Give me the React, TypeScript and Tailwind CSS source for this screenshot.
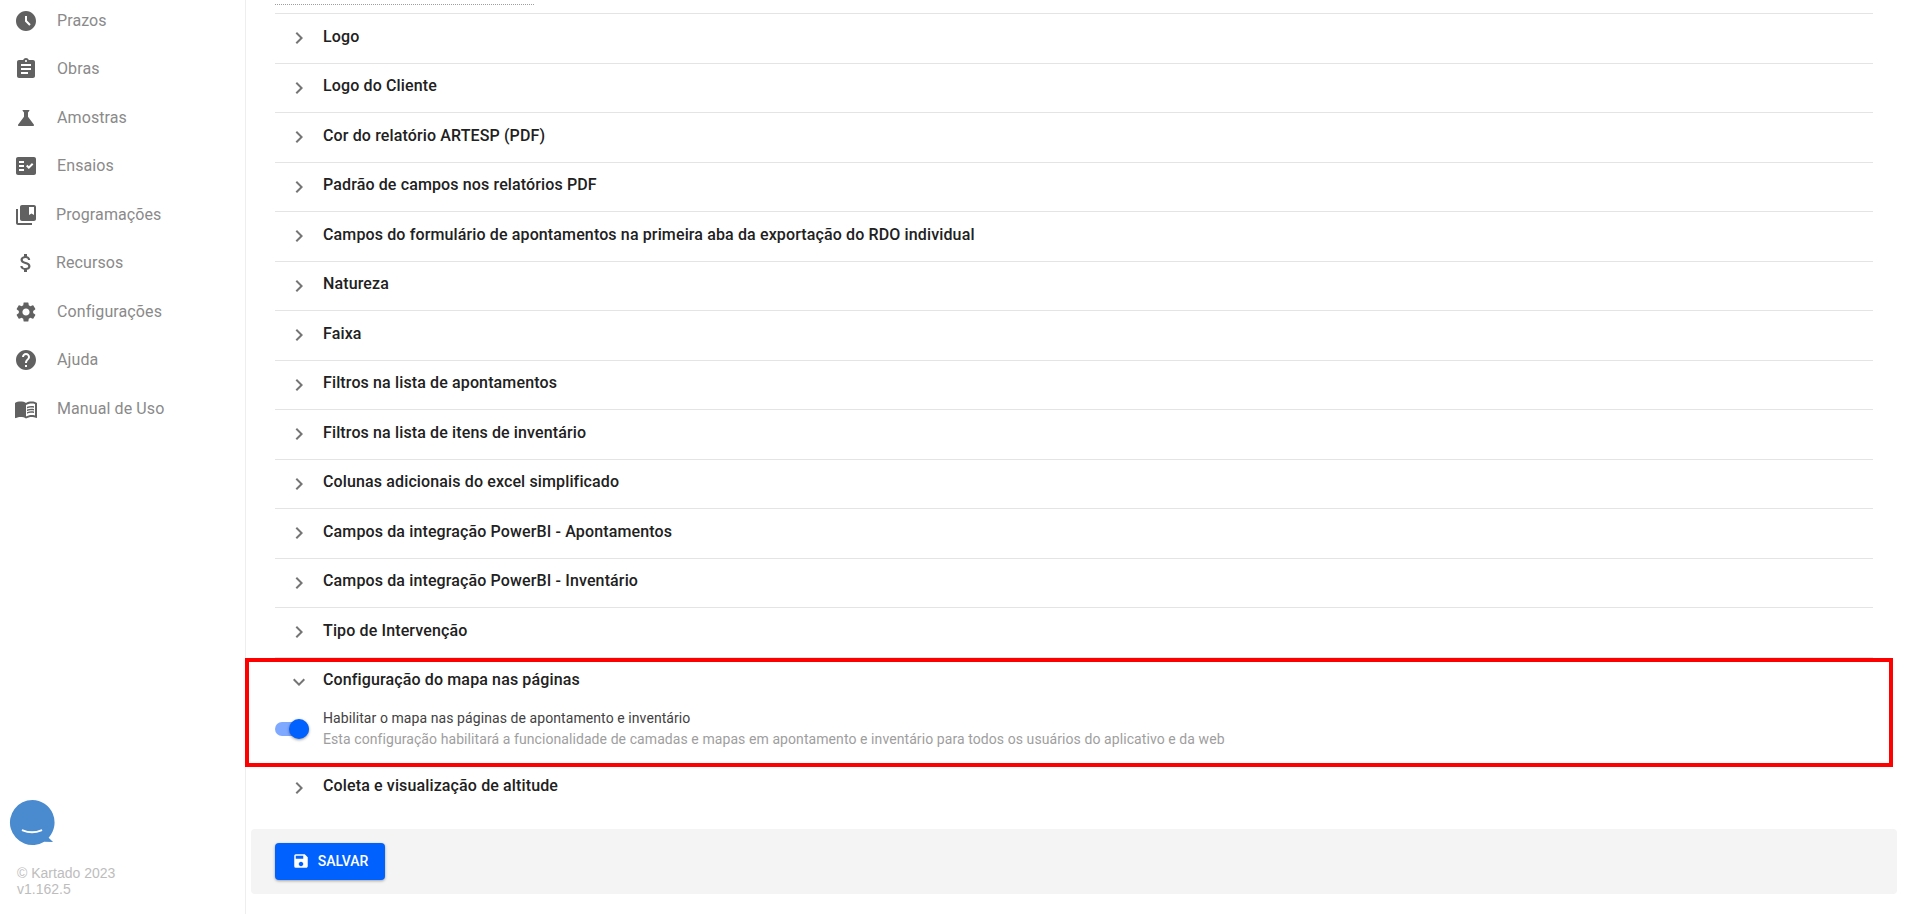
import {
  MdAccessTimeFilled,
  MdAssignment,
  MdAttachMoney,
  MdChevronRight,
  MdCollectionsBookmark,
  MdExpandMore,
  MdFactCheck,
  MdHelp,
  MdMenuBook,
  MdSave,
  MdScience,
  MdSettings,
} from "react-icons/md";

const menu = [
  { label: "Prazos", icon: MdAccessTimeFilled, gap: "ml-[19px]" },
  { label: "Obras", icon: MdAssignment, gap: "ml-[19px]" },
  { label: "Amostras", icon: MdScience, gap: "ml-[19px]" },
  { label: "Ensaios", icon: MdFactCheck, gap: "ml-[19px]" },
  { label: "Programações", icon: MdCollectionsBookmark, gap: "ml-[18px]" },
  { label: "Recursos", icon: MdAttachMoney, gap: "ml-[18px]" },
  { label: "Configurações", icon: MdSettings, gap: "ml-[19px]" },
  { label: "Ajuda", icon: MdHelp, gap: "ml-[19px]" },
  { label: "Manual de Uso", icon: MdMenuBook, gap: "ml-[19px]" },
];

const sections = [
  "Logo",
  "Logo do Cliente",
  "Cor do relatório ARTESP (PDF)",
  "Padrão de campos nos relatórios PDF",
  "Campos do formulário de apontamentos na primeira aba da exportação do RDO individual",
  "Natureza",
  "Faixa",
  "Filtros na lista de apontamentos",
  "Filtros na lista de itens de inventário",
  "Colunas adicionais do excel simplificado",
  "Campos da integração PowerBI - Apontamentos",
  "Campos da integração PowerBI - Inventário",
  "Tipo de Intervenção",
];

function Title({ children }: { children: string }) {
  return (
    <span className="ml-[12px] pb-[3px] text-[16px] font-medium tracking-[0.13px] text-[#212121]">{children}</span>
  );
}

export default function App() {
  return (
    <div className="relative flex h-[914px] overflow-hidden bg-white font-['Roboto',sans-serif]">
      {/* Sidebar */}
      <aside className="flex w-[246px] shrink-0 flex-col border-r border-[#eeeeee]">
        <nav className="flex flex-col pl-[14px]">
          {menu.map((item) => (
            <div key={item.label} className="flex h-[48.5px] items-center first:mb-[4px] first:h-[41px]">
              <item.icon className="size-6 text-[#616161]" />
              <span className={`${item.gap} text-[16px] tracking-[0.1px] text-[#8a8a8a]`}>{item.label}</span>
            </div>
          ))}
        </nav>
        <div className="mt-auto pb-[17px] pl-[9px]">
          <svg width="47" height="47" viewBox="0 0 48 48" className="block">
            <path d="M24 1a23 23 0 1 0 12 42.600l9 .4-4.500-4.500A23 23 0 0 0 24 1z" fill="#4a8bd0" />
            <path d="M14 32c6 2.500 13 2.500 19 0" fill="none" stroke="#fff" strokeWidth="2" strokeLinecap="round" />
          </svg>
          <div className="ml-2 mt-[19px] font-['Liberation_Sans',sans-serif] text-[14px] leading-[16px] text-[#bdbdbd]">
            <div>© Kartado 2023</div>
            <div>v1.162.5</div>
          </div>
        </div>
      </aside>

      {/* Content */}
      <main className="flex flex-1 flex-col pl-[5px] pr-[23px]">
        <div className="ml-[24px] mt-[4px] h-px w-[259px] border-t border-dotted border-[#9e9e9e]" />
        <div className="mx-[24px] mt-[8px]">
          {sections.map((title) => (
            <div key={title} className="flex h-[49.5px] items-center border-t border-[#e4e4e4]">
              <MdChevronRight className="ml-[12px] size-6 text-[#757575]" />
              <Title>{title}</Title>
            </div>
          ))}
          <div className="flex h-[108px] flex-col border-t border-[#e4e4e4]">
            <div className="flex h-[48px] items-center">
              <MdExpandMore className="ml-[12px] size-6 text-[#757575]" />
              <Title>Configuração do mapa nas páginas</Title>
            </div>
            <div className="mt-[2px] flex items-center">
              <div className="relative h-[14px] w-[34px] shrink-0 rounded-full bg-[#7fa9ff]">
                <span className="absolute -top-[3px] right-0 size-5 rounded-full bg-[#0061ff] shadow-[0_1px_3px_rgba(0,0,0,0.4)]" />
              </div>
              <div className="ml-[14px] text-[14px] leading-[21px] tracking-[0.08px]">
                <div className="text-[#424242]">Habilitar o mapa nas páginas de apontamento e inventário</div>
                <div className="text-[#9e9e9e]">
                  Esta configuração habilitará a funcionalidade de camadas e mapas em apontamento e inventário para todos os usuários do aplicativo e da web
                </div>
              </div>
            </div>
          </div>
          <div className="flex h-[46px] items-center">
            <MdChevronRight className="ml-[12px] size-6 text-[#757575]" />
            <Title>Coleta e visualização de altitude</Title>
          </div>
        </div>
        <div className="mt-[18px] flex h-[65px] items-center rounded-[4px] bg-[#f4f4f4] px-[24px]">
          <button className="flex h-[37px] w-[110px] items-center justify-center gap-2 rounded-[4px] bg-[#0061ff] text-[14px] font-medium text-white shadow-[0_1px_3px_rgba(0,0,0,0.35)]">
            <MdSave className="size-[18px]" />
            SALVAR
          </button>
        </div>
      </main>

      {/* Highlight drawn over the screenshot */}
      <div className="pointer-events-none absolute left-[245px] top-[658px] h-[109px] w-[1648px] border-4 border-[#ff0000]" />
    </div>
  );
}
